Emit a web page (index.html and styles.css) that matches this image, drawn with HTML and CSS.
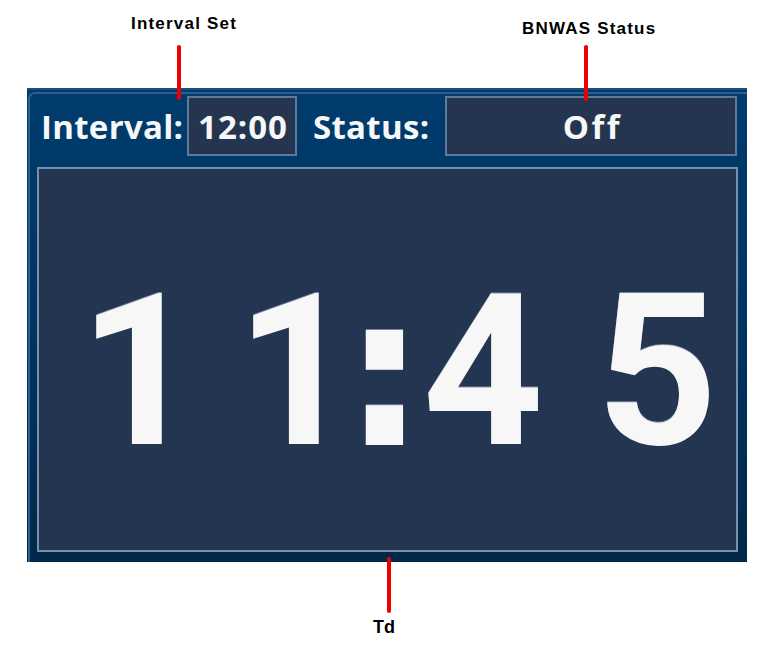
FILE: index.html
```html
<!DOCTYPE html>
<html>
<head>
<meta charset="utf-8">
<link rel="stylesheet" href="styles.css">
</head>
<body>
<div class="page">
  <div class="panel">
    <div class="frame">
      <div class="toprow">
        <div class="label label-interval">Interval:</div>
        <div class="box box-interval">12:00</div>
        <div class="label label-status">Status:</div>
        <div class="box box-status">Off</div>
      </div>
      <div class="display">
        <div class="clock"><span class="ch ch-h1">1</span><span class="ch ch-h2">1</span><span class="ch colon">:</span><span class="ch ch-m1">4</span><span class="ch ch-m2">5</span></div>
      </div>
    </div>
  </div>

  <div class="note note-interval">Interval Set</div>
  <div class="pointer pointer-interval"></div>
  <div class="note note-status">BNWAS Status</div>
  <div class="pointer pointer-status"></div>
  <div class="pointer pointer-td"></div>
  <div class="note note-td">Td</div>
</div>
</body>
</html>
```
FILE: styles.css
```css
html, body {
  margin: 0;
  padding: 0;
  background: #ffffff;
}

.page {
  position: relative;
  width: 775px;
  height: 658px;
  padding-top: 88px;
  box-sizing: border-box;
}

.panel {
  margin-left: 27px;
  width: 720px;
  height: 474px;
  box-sizing: border-box;
  background: linear-gradient(to bottom, #003c6c 0%, #003462 50%, #022849 100%);
  border-top: 2px solid #1c4f7d;
  padding: 2px 0 0 1px;
}

.frame {
  height: 100%;
  box-sizing: border-box;
  border-left: 2px solid #2f6190;
  border-top: 2px solid #2f6190;
  border-top-left-radius: 7px;
  padding: 2px 9px 10px 7px;
  display: flex;
  flex-direction: column;
  gap: 11px;
}

.toprow {
  display: flex;
  align-items: stretch;
  height: 60px;
}

.label {
  display: flex;
  align-items: center;
  font-family: "Open Sans", sans-serif;
  font-weight: 700;
  font-size: 33px;
  color: #f6f7f8;
  letter-spacing: 0.3px;
  box-sizing: border-box;
}

.label-interval {
  width: 150px;
  padding-left: 4px;
}

.label-status {
  width: 148px;
  padding-left: 16px;
}

.box {
  display: flex;
  align-items: center;
  justify-content: center;
  box-sizing: border-box;
  background: #25354f;
  border: 2px solid #5d7b98;
  font-family: "Open Sans", sans-serif;
  font-weight: 700;
  font-size: 33px;
  color: #f6f7f8;
}

.box-interval {
  width: 110px;
  letter-spacing: 1px;
  padding-left: 2px;
}

.box-status {
  flex: 1;
  margin-right: 1px;
  letter-spacing: 2.5px;
  padding-left: 3px;
}

.display {
  flex: 1;
  box-sizing: border-box;
  background: #243551;
  border: 2px solid #7890ab;
  display: flex;
  align-items: center;
  justify-content: flex-start;
  padding-top: 25px;
  padding-left: 40px;
}

.clock {
  display: flex;
  font-family: Roboto, sans-serif;
  font-weight: 700;
  font-size: 211px;
  line-height: 1;
  color: #f7f7f7;
  white-space: nowrap;
  text-shadow: 0 -1px 0 #7a859a;
}

.ch-h1 {
  margin-right: 36px;
}

.ch-h2 {
  margin-right: -15px;
}

.colon {
  font-family: "DejaVu Sans", sans-serif;
  margin-right: -4px;
}

.ch-m1 {
  margin-right: 53px;
}

.note {
  position: absolute;
  font-family: "Liberation Sans", Arial, sans-serif;
  font-weight: 700;
  font-size: 17px;
  color: #000000;
  letter-spacing: 1.2px;
  line-height: 20px;
  white-space: nowrap;
}

.note-interval {
  left: 131px;
  top: 14px;
}

.note-status {
  left: 522px;
  top: 19px;
}

.note-td {
  left: 373px;
  top: 617px;
  font-size: 18px;
  letter-spacing: 0;
}

.pointer {
  position: absolute;
  width: 4px;
  background: #ee0000;
  border-radius: 2px;
}

.pointer-interval {
  left: 177px;
  top: 45px;
  height: 55px;
}

.pointer-status {
  left: 584px;
  top: 45px;
  height: 56px;
}

.pointer-td {
  left: 387px;
  top: 557px;
  height: 56px;
}
```
